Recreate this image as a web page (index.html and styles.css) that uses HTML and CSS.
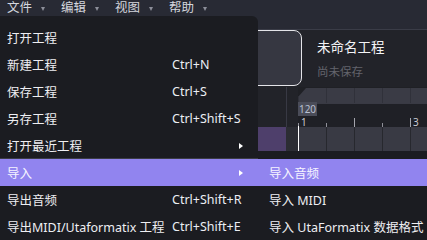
FILE: index.html
```html
<!DOCTYPE html>
<html lang="zh-CN">
<head>
<meta charset="utf-8">
<title>UtaFormatix</title>
<link rel="stylesheet" href="styles.css">
</head>
<body>
<div class="app">
  <header class="topbar">
    <nav class="menubar">
      <div class="mb-item"><span>文件</span><i class="caret"></i></div>
      <div class="mb-item"><span>编辑</span><i class="caret"></i></div>
      <div class="mb-item"><span>视图</span><i class="caret"></i></div>
      <div class="mb-item"><span>帮助</span><i class="caret"></i></div>
    </nav>
  </header>

  <section class="project">
    <div class="card"></div>
    <div class="proj-info">
      <div class="proj-title">未命名工程</div>
      <div class="proj-sub">尚未保存</div>
    </div>
  </section>

  <section class="timeline">
    <div class="tl-head"></div>
    <div class="tl-gutter"></div>
    <div class="tl-band">
      <span class="band-cell"></span><span class="band-cell"></span><span class="band-cell"></span><span class="band-cell"></span><span class="band-cell"></span>
    </div>
    <div class="tl-ruler">
      <div class="tick-cell"><i class="tick"></i><span class="bar-no">1</span><span class="tempo">120</span></div>
      <div class="tick-cell"><i class="tick"></i></div>
      <div class="tick-cell"><i class="tick tall"></i></div>
      <div class="tick-cell"><i class="tick"></i></div>
      <div class="tick-cell"><i class="tick tall"></i><span class="bar-no">3</span></div>
    </div>
    <div class="tl-track-head"></div>
    <div class="tl-track-gutter"></div>
    <div class="tl-track">
      <span class="cell"></span><span class="cell"></span><span class="cell"></span><span class="cell"></span><span class="cell"></span>
      <i class="playhead"></i>
    </div>
  </section>

  <div class="menu">
    <div class="mi"><span class="ml">打开工程</span></div>
    <div class="mi"><span class="ml">新建工程</span><span class="ms">Ctrl+N</span></div>
    <div class="mi"><span class="ml">保存工程</span><span class="ms">Ctrl+S</span></div>
    <div class="mi"><span class="ml">另存工程</span><span class="ms">Ctrl+Shift+S</span></div>
    <div class="mi"><span class="ml">打开最近工程</span><i class="sub-arrow"></i></div>
    <div class="mi active"><span class="ml">导入</span><i class="sub-arrow"></i></div>
    <div class="mi"><span class="ml">导出音频</span><span class="ms">Ctrl+Shift+R</span></div>
    <div class="mi"><span class="ml">导出MIDI/Utaformatix 工程</span><span class="ms">Ctrl+Shift+E</span></div>
  </div>

  <div class="submenu">
    <div class="mi sub active"><span>导入音频</span></div>
    <div class="mi sub"><span>导入 MIDI</span></div>
    <div class="mi sub"><span>导入 UtaFormatix 数据格式</span></div>
  </div>
</div>
</body>
</html>
```

FILE: styles.css
```css
* { box-sizing: border-box; margin: 0; padding: 0; }

html, body {
  width: 427px;
  height: 240px;
  overflow: hidden;
  background: #212228;
}

body {
  font-family: "Noto Sans", "Noto Sans CJK SC", sans-serif;
  font-size: 12.5px;
  color: #eeeef2;
}

.app {
  position: relative;
  width: 427px;
  height: 240px;
  display: flex;
  flex-direction: column;
}

/* top bar */
.topbar {
  height: 30px;
  flex: 0 0 30px;
  background: #282a34;
  border-bottom: 1px solid #3a3c47;
}

.menubar {
  display: flex;
  height: 16px;
  align-items: center;
  padding-left: 7px;
  gap: 16px;
}

.mb-item {
  display: flex;
  align-items: center;
  gap: 9px;
  color: #d4d6de;
  line-height: 16px;
}

.caret {
  display: block;
  width: 0;
  height: 0;
  border-left: 2.5px solid transparent;
  border-right: 2.5px solid transparent;
  border-top: 4px solid #8c8e99;
  margin-top: 2px;
}

/* project row */
.project {
  display: flex;
  height: 57px;
  flex: 0 0 57px;
  background: #222329;
}

.card {
  margin-left: 8px;
  width: 294px;
  height: 56px;
  background: #363741;
  border: 1.5px solid #e4e4e8;
  border-radius: 8px;
}

.proj-info {
  margin-left: 15px;
  padding-top: 8px;
}

.proj-title {
  font-size: 13.5px;
  line-height: 18px;
  color: #f4f4f6;
}

.proj-sub {
  margin-top: 8px;
  font-size: 11.5px;
  line-height: 16px;
  color: #62636c;
}

/* timeline */
.timeline {
  display: grid;
  grid-template-columns: 286px 12px 1fr;
  grid-template-rows: 16px 24px 25px;
  background: #1f2025;
  flex: 1;
  align-content: start;
}

.tl-head {
  grid-column: 1;
  grid-row: 1 / 3;
  background: #222329;
}

.tl-gutter {
  grid-column: 2;
  grid-row: 1 / 3;
  border-left: 1px solid #383944;
  background: #222329;
}

.tl-band {
  grid-column: 3;
  grid-row: 1;
  display: flex;
  background: #3a3b45;
  clip-path: polygon(8px 0, 100% 0, 100% 100%, 0 100%, 0 9px);
  margin-top: 1px;
}

.band-cell {
  flex: 0 0 28px;
  border-left: 1px solid #30313a;
}

.tl-ruler {
  grid-column: 3;
  grid-row: 2;
  display: flex;
  border-top: 1px solid #393a44;
  background: #1f2026;
  position: relative;
}

.tick-cell {
  flex: 0 0 28px;
  display: flex;
  align-items: flex-end;
  position: relative;
}

.tick {
  display: block;
  width: 1px;
  height: 4px;
  background: #8f9099;
}

.tick.tall {
  height: 9px;
  background: #a4a5ad;
}

.bar-no {
  font-size: 10px;
  line-height: 10px;
  margin: 0 0 0 2px;
  color: #c9cad2;
}

.tempo {
  position: absolute;
  left: 0;
  top: -2px;
  width: 19px;
  height: 14px;
  background: #4a4c58;
  color: #b9c0d2;
  font-size: 10px;
  line-height: 14px;
  text-align: center;
}

.tl-track-head {
  grid-column: 1;
  grid-row: 3;
  background: #4e3f6b;
}

.tl-track-gutter {
  grid-column: 2;
  grid-row: 3;
  background: #2c2d34;
}

.tl-track {
  grid-column: 3;
  grid-row: 3;
  display: flex;
  position: relative;
  background: #393a44;
}

.cell {
  flex: 0 0 28px;
  border-left: 1px solid #27282e;
}

.cell:first-child { border-left: 0; }

.playhead {
  position: absolute;
  left: 0;
  top: -1px;
  bottom: 0;
  width: 1px;
  background: #ffffff;
}

/* dropdown menu */
.menu {
  position: absolute;
  left: 0;
  top: 16px;
  width: 258px;
  bottom: 0;
  background: #1b1c21;
  border-top-right-radius: 6px;
  padding-top: 8px;
}

.mi {
  height: 27px;
  display: flex;
  align-items: center;
  padding-left: 7px;
  color: #eeeef2;
  white-space: nowrap;
}

.mi.active {
  background: #9184ef;
  color: #f6f4ff;
  box-shadow: 0 -1px 0 #3b3c46;
}

.ml {
  flex: 0 0 165px;
}

.ms {
  color: #eceef4;
}

.sub-arrow {
  display: block;
  margin-left: auto;
  margin-right: 15px;
  width: 0;
  height: 0;
  border-top: 3px solid transparent;
  border-bottom: 3px solid transparent;
  border-left: 4px solid #ffffff;
}

.submenu {
  position: absolute;
  left: 258px;
  top: 151px;
  right: 0;
  bottom: 0;
  background: #1b1c21;
  padding-top: 8px;
}

.mi.sub {
  padding-left: 11px;
}

.mi.sub.active {
  box-shadow: none;
}
```
